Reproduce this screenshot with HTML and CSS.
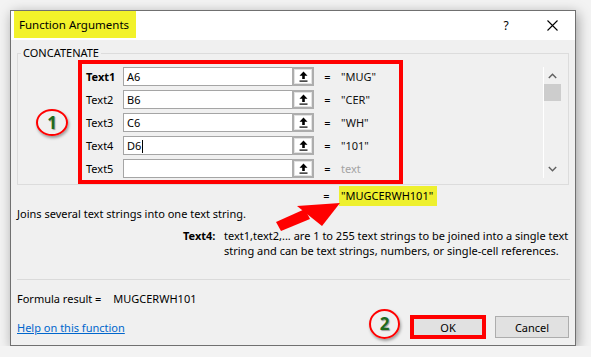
FILE: index.html
```html
<!DOCTYPE html>
<html lang="en">
<head>
<meta charset="UTF-8">
<title>Function Arguments</title>
<link rel="stylesheet" href="styles.css">
</head>
<body>

<div class="dialog">
  <div class="titlebar">
    <span class="title">Function Arguments</span>
    <span class="tb-btn help">?</span>
    <span class="tb-btn close">
      <svg width="11" height="11" viewBox="0 0 11 11"><path d="M0.5 0.5 L10.5 10.5 M10.5 0.5 L0.5 10.5" stroke="#000" stroke-width="1.1" fill="none"/></svg>
    </span>
  </div>

  <div class="client">
    <fieldset class="group">
      <legend>CONCATENATE</legend>
      <div class="group-body">
        <div class="mark-col">
          <div class="mark">1</div>
        </div>

        <div class="args">
          <div class="arg">
            <label class="arg-name bold">Text1</label>
            <div class="field"><span class="field-text">A6</span><span class="ref-btn"><svg width="9" height="11" viewBox="0 0 9 11"><path d="M4.5 0.5 L0.5 4.8 H3.2 V8 H5.8 V4.8 H8.5 Z" fill="#000"/><rect x="0.5" y="9.5" width="8" height="1.2" fill="#000"/></svg></span></div>
            <span class="eq">=</span>
            <span class="val">"MUG"</span>
          </div>
          <div class="arg">
            <label class="arg-name">Text2</label>
            <div class="field"><span class="field-text">B6</span><span class="ref-btn"><svg width="9" height="11" viewBox="0 0 9 11"><path d="M4.5 0.5 L0.5 4.8 H3.2 V8 H5.8 V4.8 H8.5 Z" fill="#000"/><rect x="0.5" y="9.5" width="8" height="1.2" fill="#000"/></svg></span></div>
            <span class="eq">=</span>
            <span class="val">"CER"</span>
          </div>
          <div class="arg">
            <label class="arg-name">Text3</label>
            <div class="field"><span class="field-text">C6</span><span class="ref-btn"><svg width="9" height="11" viewBox="0 0 9 11"><path d="M4.5 0.5 L0.5 4.8 H3.2 V8 H5.8 V4.8 H8.5 Z" fill="#000"/><rect x="0.5" y="9.5" width="8" height="1.2" fill="#000"/></svg></span></div>
            <span class="eq">=</span>
            <span class="val">"WH"</span>
          </div>
          <div class="arg">
            <label class="arg-name">Text4</label>
            <div class="field"><span class="field-text">D6<span class="caret"></span></span><span class="ref-btn"><svg width="9" height="11" viewBox="0 0 9 11"><path d="M4.5 0.5 L0.5 4.8 H3.2 V8 H5.8 V4.8 H8.5 Z" fill="#000"/><rect x="0.5" y="9.5" width="8" height="1.2" fill="#000"/></svg></span></div>
            <span class="eq">=</span>
            <span class="val">"101"</span>
          </div>
          <div class="arg">
            <label class="arg-name">Text5</label>
            <div class="field"><span class="field-text"></span><span class="ref-btn"><svg width="9" height="11" viewBox="0 0 9 11"><path d="M4.5 0.5 L0.5 4.8 H3.2 V8 H5.8 V4.8 H8.5 Z" fill="#000"/><rect x="0.5" y="9.5" width="8" height="1.2" fill="#000"/></svg></span></div>
            <span class="eq">=</span>
            <span class="val muted">text</span>
          </div>
        </div>

        <div class="scroll">
          <svg class="chev" width="9" height="6" viewBox="0 0 9 6"><path d="M0.8 5 L4.5 1.2 L8.2 5" stroke="#606060" stroke-width="1.4" fill="none"/></svg>
          <div class="thumb"></div>
          <svg class="chev down" width="9" height="6" viewBox="0 0 9 6"><path d="M0.8 1 L4.5 4.8 L8.2 1" stroke="#606060" stroke-width="1.4" fill="none"/></svg>
        </div>
      </div>
    </fieldset>

    <div class="result">
      <span class="eq">=</span>
      <span class="hl">"MUGCERWH101"</span>
    </div>

    <p class="desc">Joins several text strings into one text string.</p>

    <div class="argdesc">
      <b>Text4:</b>
      <span>text1,text2,... are 1 to 255 text strings to be joined into a single text<br>string and can be text strings, numbers, or single-cell references.</span>
    </div>

    <hr class="sep">

    <div class="formula">Formula result = <span class="formula-val">MUGCERWH101</span></div>

    <div class="footer">
      <a href="#" class="help-link">Help on this function</a>
      <div class="mark mark2">2</div>
      <div class="ok-frame"><button class="btn ok">OK</button></div>
      <button class="btn cancel">Cancel</button>
    </div>
  </div>

  <svg class="arrow" width="80" height="40" viewBox="265 196 80 40">
    <polygon points="276,222 305,209 310,219 281,231" fill="#ff0000"/>
    <polygon points="297,206 340,203 322,226" fill="#ff0000"/>
  </svg>
</div>

</body>
</html>
```

FILE: styles.css
```css
* {
  box-sizing: border-box;
}

body {
  margin: 0;
  background: #f3f3f3;
  font-family: "Noto Sans", sans-serif;
  font-size: 11px;
  color: #000;
}

.dialog {
  position: relative;
  width: 566px;
  height: 336px;
  margin: 10px 0 0 10px;
  border: 1px solid #707070;
  background: #f0f0f0;
  box-shadow: 2px 3px 12px rgba(0, 0, 0, 0.35);
}

/* title bar */
.titlebar {
  display: flex;
  align-items: flex-start;
  height: 29px;
  background: #fff;
}

.title {
  margin-left: 3px;
  height: 27px;
  line-height: 27px;
  padding: 0 7px 0 5px;
  font-size: 11.5px;
  background: #f2f22a;
}

.tb-btn {
  display: flex;
  align-items: center;
  justify-content: center;
  width: 46px;
  height: 29px;
}

.help {
  margin-left: auto;
  font-size: 12px;
}

/* group box */
.group {
  margin: 6px 6px 0 6px;
  padding: 0;
  border: 1px solid #dcdcdc;
  min-width: 0;
}

.group legend {
  margin-left: 3px;
  padding: 0 2px;
  line-height: 14px;
  font-size: 11px;
}

.group-body {
  display: flex;
  height: 124px;
}

.mark-col {
  width: 60px;
  display: flex;
  align-items: center;
  padding-left: 18px;
}

.mark {
  width: 32px;
  height: 27px;
  border: 2px solid #ff0000;
  border-radius: 50%;
  display: flex;
  align-items: center;
  justify-content: center;
  font-size: 17px;
  font-weight: bold;
  color: #1d6b1d;
  text-shadow: 1px 1px 1px rgba(0, 0, 0, 0.35);
  box-shadow: 1px 2px 3px rgba(0, 0, 0, 0.35);
}

.args {
  width: 325px;
  border: 4px solid #ff0000;
  padding: 3px 0 2px 4px;
  display: flex;
  flex-direction: column;
  gap: 4px;
}

.arg {
  display: grid;
  grid-template-columns: 37px 191px 27px auto;
  align-items: center;
  height: 19px;
}

.arg-name.bold {
  font-weight: bold;
}

.field {
  display: flex;
  height: 19px;
  border: 1px solid #a5a5a5;
  background: #fff;
}

.field-text {
  flex: 1;
  padding-left: 3px;
  line-height: 17px;
}

.caret {
  display: inline-block;
  width: 1px;
  height: 13px;
  background: #000;
  vertical-align: -3px;
  margin-left: 1px;
}

.ref-btn {
  width: 22px;
  margin: -1px -1px -1px 0;
  border: 2px solid #adadad;
  background: #fff;
  box-shadow: inset 0 0 0 1px #e3e3e3;
  display: flex;
  align-items: center;
  justify-content: center;
}

.eq {
  text-align: center;
}

.val {
  color: #101010;
}

.val.muted {
  color: #a3a3a3;
}

.scroll {
  margin: 7px 7px 0 auto;
  width: 18px;
  height: 111px;
  border-left: 1px solid #fff;
  display: flex;
  flex-direction: column;
  align-items: center;
}

.chev {
  margin-top: 6px;
}

.chev.down {
  margin-top: auto;
  margin-bottom: 6px;
}

.thumb {
  margin-top: 5px;
  width: 17px;
  height: 17px;
  background: #cdcdcd;
}

/* result and description */
.result {
  display: flex;
  margin: 1px 0 0 303px;
  height: 20px;
  line-height: 20px;
}

.result .eq {
  width: 25px;
}

.hl {
  padding: 0 4px 0 2px;
  background: #eef02e;
}

.desc {
  margin: 0 0 0 6px;
  line-height: 15px;
}

.argdesc {
  display: grid;
  grid-template-columns: 41px auto;
  margin: 7px 0 0 172px;
  line-height: 15px;
  white-space: nowrap;
}

.sep {
  margin: 21px 5px 0 6px;
  border: 0;
  border-top: 1px solid #dadada;
}

.formula {
  margin: 11px 0 0 6px;
  line-height: 16px;
}

.formula-val {
  margin-left: 9px;
}

/* footer */
.footer {
  display: flex;
  align-items: center;
  margin: 8px 6px 0 6px;
  height: 24px;
}

.help-link {
  color: #0066cc;
  text-decoration: underline;
}

.mark2 {
  margin: -7px 10px 0 auto;
  width: 31px;
  height: 30px;
}

.ok-frame {
  width: 76px;
  height: 24px;
  border: 4px solid #ff0000;
}

.btn {
  font-family: "Noto Sans", sans-serif;
  font-size: 11px;
  color: #000;
  background: #e1e1e1;
  border: 1px solid #adadad;
  padding: 0;
}

.ok {
  width: 100%;
  height: 100%;
  border: 0;
}

.cancel {
  margin-left: 9px;
  width: 74px;
  height: 22px;
}

.arrow {
  position: absolute;
  left: 254px;
  top: 185px;
}
```
